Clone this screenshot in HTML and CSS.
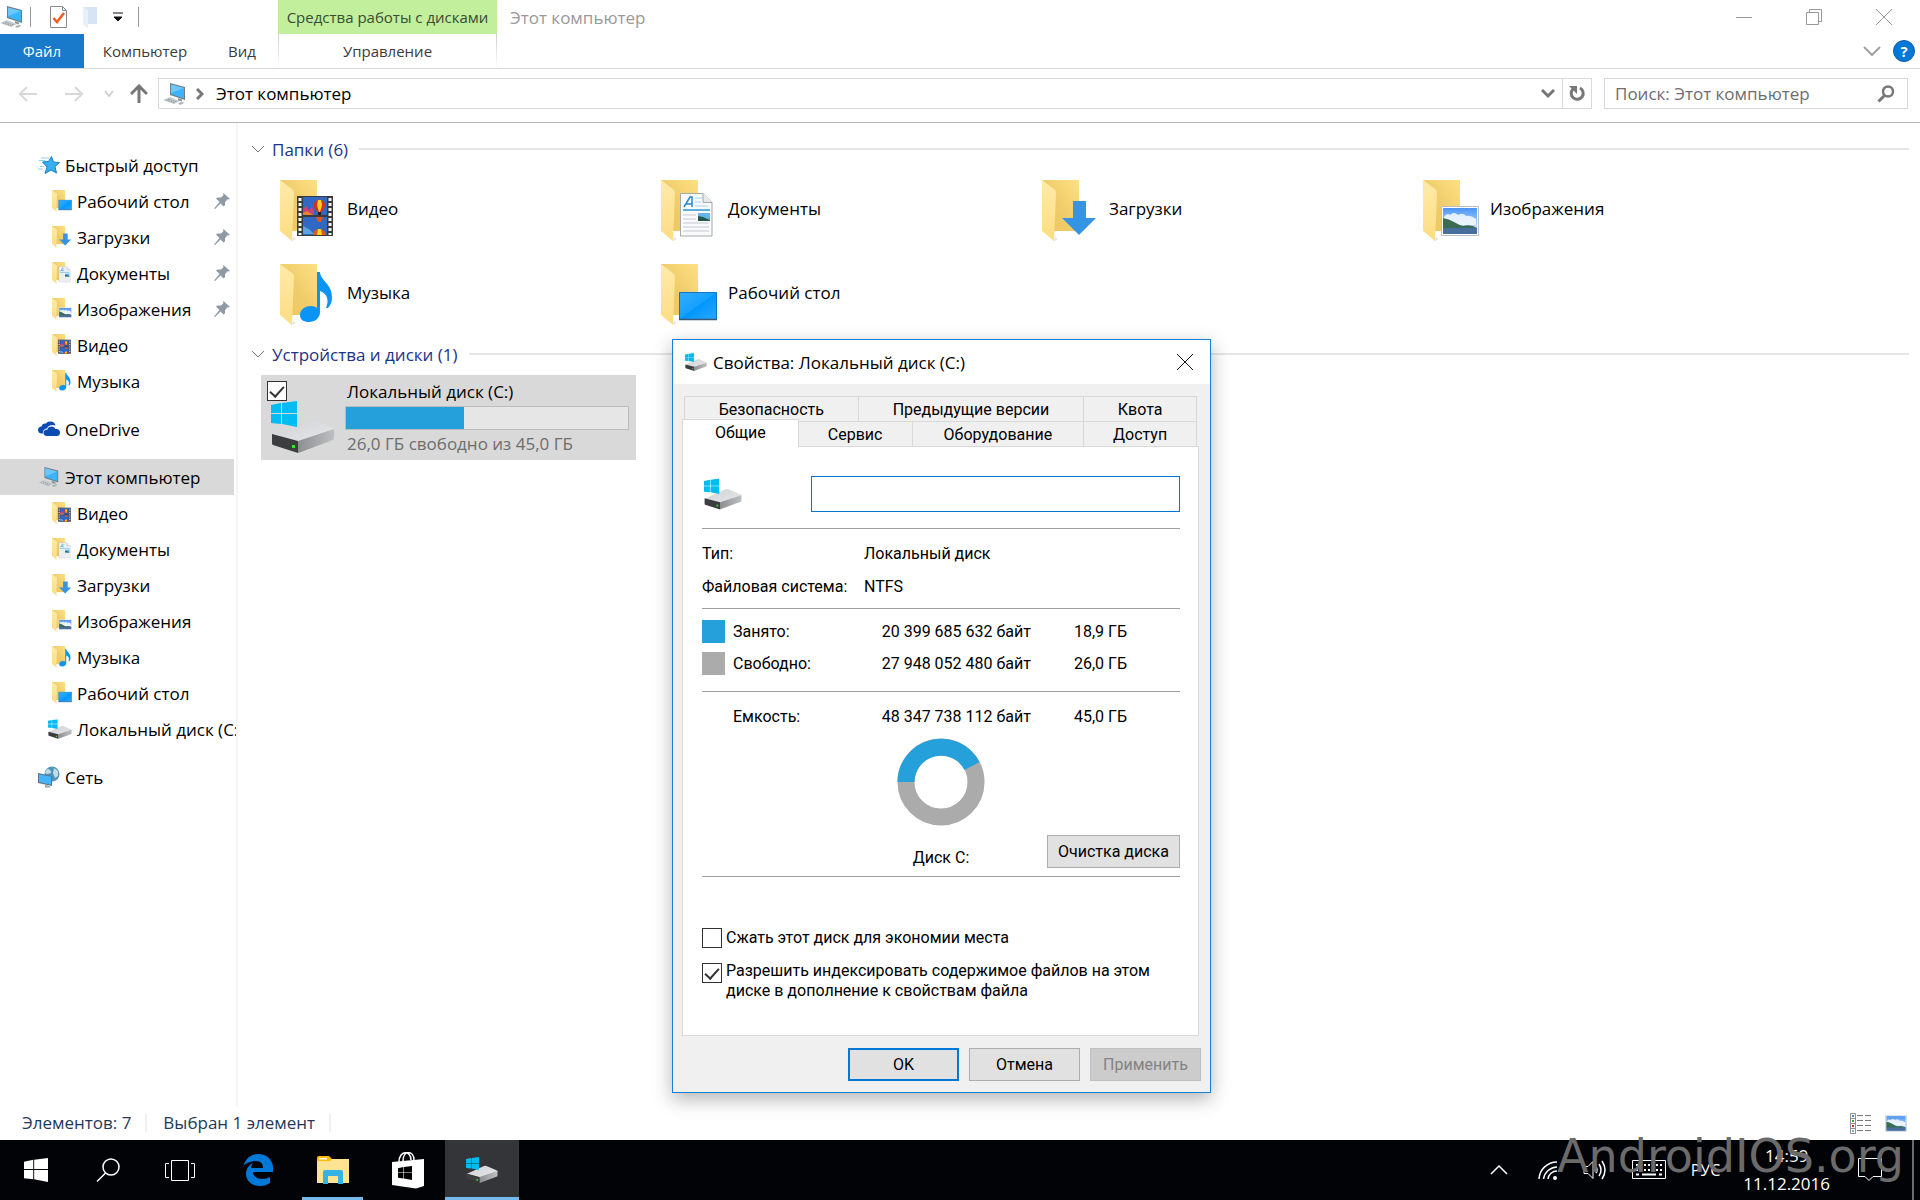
FILE: index.html
```html
<!DOCTYPE html>
<html lang="ru">
<head>
    <meta charset="UTF-8">
    <meta name="viewport" content="width=device-width, initial-scale=1.0">
    <title>Этот компьютер</title>
    <link rel="stylesheet" href="styles.css">
</head>
<body>

    <svg class="sprite" aria-hidden="true">
        <defs>
            <linearGradient id="g-back" x1="0" y1="1" x2="1" y2="0">
                <stop offset="0" stop-color="#ecc65e"/>
                <stop offset="0.5" stop-color="#f0cd6b"/>
                <stop offset="1" stop-color="#fde184"/>
            </linearGradient>
            <linearGradient id="g-flap" x1="0" y1="0" x2="0" y2="1">
                <stop offset="0" stop-color="#ffeaa8"/>
                <stop offset="1" stop-color="#fddd83"/>
            </linearGradient>
            <linearGradient id="g-screen" x1="0" y1="0" x2="1" y2="1">
                <stop offset="0" stop-color="#34adfd"/>
                <stop offset="0.49" stop-color="#16a0ff"/>
                <stop offset="0.5" stop-color="#0097ff"/>
                <stop offset="1" stop-color="#2ba7fb"/>
            </linearGradient>
            <linearGradient id="g-top" x1="0" y1="0" x2="1" y2="1">
                <stop offset="0" stop-color="#cfd1d4"/>
                <stop offset="1" stop-color="#e6e7e9"/>
            </linearGradient>
            <linearGradient id="g-side" x1="0" y1="0" x2="1" y2="0">
                <stop offset="0" stop-color="#8c8e91"/>
                <stop offset="1" stop-color="#bdbfc2"/>
            </linearGradient>
            <linearGradient id="g-sky" x1="0" y1="0" x2="0" y2="1">
                <stop offset="0" stop-color="#4b94f5"/>
                <stop offset="1" stop-color="#e4f3fc"/>
            </linearGradient>
        </defs>

        <symbol id="folder" viewBox="0 0 56 62">
            <path d="M0 0h37v51H0z" fill="url(#g-back)"/>
            <path d="M12 61l4-2-3-2z" fill="#e3e3e3"/>
            <path d="M0 0l12 9q2 1 2 4l-2 48L0 51z" fill="url(#g-flap)"/>
        </symbol>
        <symbol id="f-video" viewBox="0 0 56 62">
            <use href="#folder"/>
            <path d="M17 16h36v40H17z" fill="#3a3a3c"/>
            <path d="M23 17h24v18H23zM23 37h24v18H23z" fill="#3168c4"/>
            <path d="M23 29l3-3 3 4 3-3 2 3v5H23z" fill="#c9407c"/>
            <path d="M23 33l4-2 6 4H23z" fill="#e8842a"/>
            <path d="M23 46l6 3 5 5H23z" fill="#5aa2e2"/>
            <path d="M34 25a5 5 0 0 1 11 0c0 4-3 6-4 7h-3c-1-1-4-3-4-7z" fill="#d8301c"/>
            <path d="M38 20h3l1 5-2 7h-1l-2-7z" fill="#ffd21e"/>
            <path d="M38 32h3v3h-3z" fill="#2a1c12"/>
            <path d="M36 37h7l-2 5h-3zM33 55c0-8 12-8 13 0z" fill="#e0561b"/>
            <path d="M38 49h3l1 6h-5z" fill="#ffd21e"/>
            <path d="M20 18v37M50 18v37" stroke="#f2f2f2" stroke-width="3" stroke-dasharray="3 2"/>
        </symbol>
        <symbol id="f-docs" viewBox="0 0 56 62">
            <use href="#folder"/>
            <path d="M19.500 13.500H42l9 9V56H19.500z" fill="#f9fafb" stroke="#a4a9ae"/>
            <path d="M42 13.500v9h9" fill="#e8e9eb" stroke="#a4a9ae"/>
            <path d="M23 27l6-10h2v10M25 24h6" fill="none" stroke="#2389c9" stroke-width="1.500"/>
            <path d="M34 18h7M34 22h6M34 26h13" stroke="#a5d3ec"/>
            <path d="M22 30h27" stroke="#5fb0dd" stroke-width="2"/>
            <path d="M22 35h13M22 39h13M22 43h26M22 47h26M22 51h26" stroke="#c5c9cd"/>
            <path d="M37 33h12v8H37z" fill="#65b4ea"/>
            <path d="M37 36l5 1 7 3v1H37z" fill="#24584f"/>
        </symbol>
        <symbol id="f-down" viewBox="0 0 56 62">
            <use href="#folder"/>
            <path d="M31 21h13v17h10L37 55 20 38h11z" fill="#3694e5"/>
        </symbol>
        <symbol id="photo" viewBox="0 0 38 30">
            <path d="M.5.500h37v29H.500z" fill="#fff" stroke="#b9bec4"/>
            <path d="M2 2h34v26H2z" fill="url(#g-sky)"/>
            <path d="M3 11q3-5 6-2 4-4 8 0 5-3 8 1 5-1 10 3v6H3z" fill="#fff" opacity=".8"/>
            <path d="M2 12q6 1 11 4t9 4q8-2 14 2v2H2z" fill="#3a6c53"/>
            <path d="M2 22h34v6H2z" fill="#466f9d"/>
        </symbol>
        <symbol id="f-pics" viewBox="0 0 56 62">
            <use href="#folder"/>
            <use href="#photo" x="18" y="26" width="38" height="30"/>
        </symbol>
        <symbol id="f-music" viewBox="0 0 56 62">
            <use href="#folder"/>
            <path d="M37 8h3c0 8 12 12 12 25 0 4-1 8-4 11h-2c3-7 2-14-6-17v21c0 6-5 10-11 10-5 0-9-2-9-7 0-6 6-9 11-9 3 0 5 1 6 2z" fill="#0a94f5"/>
        </symbol>
        <symbol id="f-desk" viewBox="0 0 56 62">
            <use href="#folder"/>
            <path d="M18.500 28.500h37v27h-37z" fill="url(#g-screen)" stroke="#1374c5"/>
            <path d="M18 55.500h38" stroke="#3a5a78" stroke-width="1.500"/>
        </symbol>

        <symbol id="winlogo" viewBox="0 0 26 26">
            <path d="M0 4l10-2v10H0zM11 2l15-2v12H11zM0 13h10v10L0 22zM11 13h15v13l-15-3z"/>
        </symbol>
        <symbol id="drive" viewBox="0 0 64 52">
            <path d="M1 34l35-16q3-1 5 0l21 9q2 1 1 2L28 41z" fill="url(#g-top)"/>
            <path d="M27 40l36-12v9q0 1-1 2L30 51l-3 1z" fill="url(#g-side)"/>
            <path d="M1 33l26 7v12L2 44q-1 0-1-2z" fill="#3c3d3e"/>
            <path d="M21 44h3v3h-3z" fill="#3ae03a"/>
            <use href="#winlogo" width="26" height="26" fill="#00bcf2"/>
        </symbol>

        <symbol id="pc" viewBox="0 0 24 22">
            <path d="M7 0l15 4v13L7 12z" fill="#6f7d88"/>
            <path d="M8 1.500l13 3.500v10.500L8 11z" fill="#3fb3fa"/>
            <path d="M8 1.500l13 3.500L8 10z" fill="#6cc7fd"/>
            <path d="M15 15l4 1.500v2l-4-1z" fill="#8d979e"/>
            <path d="M0 17l7-3 10 4-6 3z" fill="#c9ced2"/>
            <path d="M3 17l9 3M5 16l9 3" stroke="#8b949b" stroke-dasharray="1.500 1"/>
            <path d="M15 20l5-1 1 1-4 2z" fill="#a6adb3"/>
        </symbol>
        <symbol id="star" viewBox="0 0 22 18">
            <path d="M13.500.500l2 5.500 6 .5-4.500 4 1.500 6.500-5.500-3-6 3.500 2-6.500L4.500 6l6-.5z" fill="#35aef2" stroke="#1b7fc9"/>
            <path d="M3 2h8M1 4.500h6M0 13h5M2 10.500h4" stroke="#8fd0f6"/>
        </symbol>
        <symbol id="cloud" viewBox="0 0 22 15">
            <path d="M5 12H3.500C1.500 12 0 10.500 0 8.500 0 6.500 1.500 5 3.500 5 4 2.500 6 1.500 8 2c1-1.500 2.500-2 4.500-2C15 0 17 1.500 17.500 4c-4-1.500-7.500 0-8.500 3-2.500 0-4.500 2.500-4 5z" fill="#0c4bb3"/>
            <path d="M9 14.500c-2 0-3.500-1-3.500-3s1.500-3.500 4-3.500c.5-3 5.500-4.500 8-.5 2.500-.5 4.500 1 4.500 3.500s-1.500 3.500-3 3.500z" fill="#0c4bb3"/>
        </symbol>
        <symbol id="net" viewBox="0 0 22 22">
            <circle cx="14" cy="8" r="7.500" fill="#4f96bd"/>
            <path d="M9 3q4 0 4 4l-4 1-2-1zM16 2l4 3v5l-3 2-2-5z" fill="#c3dde8"/>
            <path d="M0 7l14 3v10L0 17z" fill="#5f7484"/>
            <path d="M1 8.200l12 2.600v8L1 16z" fill="#45b5fa"/>
            <path d="M7 19l4 .8 2 1.700H7z" fill="#9aa4ab"/>
        </symbol>
        <symbol id="pin" viewBox="0 0 16 16">
            <path d="M9.500 0L16 6l-1.500.5-1-.3-2.500 3v3L9.500 13.500 6.500 10.500 1 16l-1-.5L5.500 9 2 5.500 3.500 4.500h3.500l2.500-2.500-.5-1.500z" fill="#8e9ba5"/>
        </symbol>
        <symbol id="lens" viewBox="0 0 18 18">
            <circle cx="11" cy="6.500" r="5" fill="none" stroke="currentColor" stroke-width="2.500"/>
            <path d="M7.500 10.500L1.500 16.500" stroke="currentColor" stroke-width="3"/>
        </symbol>
    </svg>

    <main class="explorer">
        <header class="titlebar">
            <div class="quick">
                <svg class="ico-pc"><use href="#pc"/></svg>
                <span class="bar"></span>
                <button aria-label="Свойства">
                    <svg width="18" height="22" viewBox="0 0 18 22">
                        <path d="M.5.500h12l4 4v17H.500z" fill="#fff" stroke="#8a8a8a"/>
                        <path d="M12.500.500v4h4" fill="none" stroke="#8a8a8a"/>
                        <path d="M3.500 12l3.500 4 7-9" fill="none" stroke="#f05a1c" stroke-width="2.500"/>
                    </svg>
                </button>
                <button aria-label="Новая папка">
                    <svg width="15" height="22" viewBox="0 0 15 22">
                        <path d="M0 1h14v17H2z" fill="#d6e5f6"/>
                        <path d="M0 1l5 3v18l-5-3z" fill="#e8f1fb"/>
                    </svg>
                </button>
                <button aria-label="Настройка панели">
                    <svg width="10" height="10" viewBox="0 0 10 10"><path d="M0 1h10M1 5h8l-4 4z" fill="#111" stroke="#111"/></svg>
                </button>
                <span class="bar"></span>
            </div>
            <div class="context-title">Средства работы с дисками</div>
            <h1>Этот компьютер</h1>
            <div class="win-buttons">
                <button aria-label="Свернуть"><svg width="16" height="16"><path d="M0 8.500h16" stroke="#999"/></svg></button>
                <button aria-label="Развернуть"><svg width="16" height="16"><path d="M.5 3.500h12v12H.500zM3.500 3.500v-3h12v12h-3" fill="none" stroke="#999"/></svg></button>
                <button aria-label="Закрыть"><svg width="16" height="16"><path d="M0 0l16 16M16 0L0 16" stroke="#999"/></svg></button>
            </div>
        </header>

        <nav class="ribbon">
            <button class="file">Файл</button>
            <button class="tab-computer">Компьютер</button>
            <button class="tab-view">Вид</button>
            <button class="tab-manage">Управление</button>
            <div class="ribbon-end">
                <button aria-label="Развернуть ленту"><svg width="18" height="10"><path d="M1 1l8 8 8-8" fill="none" stroke="#a0a0a0" stroke-width="2"/></svg></button>
                <button class="help" aria-label="Справка">?</button>
            </div>
        </nav>

        <div class="address-row">
            <div class="nav-buttons">
                <button aria-label="Назад"><svg width="20" height="16"><path d="M19 8H2M9 1L2 8l7 7" fill="none" stroke="#d8d8d8" stroke-width="2"/></svg></button>
                <button class="forward" aria-label="Вперед"><svg width="20" height="16"><path d="M1 8h17M11 1l7 7-7 7" fill="none" stroke="#d8d8d8" stroke-width="2"/></svg></button>
                <button aria-label="Последние расположения"><svg width="10" height="8"><path d="M1 1l4 5 4-5" fill="none" stroke="#d0d0d0" stroke-width="2"/></svg></button>
                <button aria-label="Вверх"><svg width="18" height="19"><path d="M9 19V2M1 10l8-8 8 8" fill="none" stroke="#777" stroke-width="3"/></svg></button>
            </div>
            <div class="address">
                <svg class="ico-pc"><use href="#pc"/></svg>
                <svg width="8" height="12"><path d="M1 1l5 5-5 5" fill="none" stroke="#777" stroke-width="3"/></svg>
                <a href="#">Этот компьютер</a>
                <button class="drop" aria-label="Предыдущие расположения"><svg width="14" height="10"><path d="M1 1l6 6 6-6" fill="none" stroke="#777" stroke-width="3"/></svg></button>
                <button class="refresh" aria-label="Обновить">
                    <svg width="18" height="18"><path d="M12 3a6 6 0 1 1-7 1" fill="none" stroke="#777" stroke-width="3"/><path d="M1 1h8v8z" fill="#777"/></svg>
                </button>
            </div>
            <div class="search">
                <input type="text" aria-label="Поиск" placeholder="Поиск: Этот компьютер">
                <svg width="18" height="18"><use href="#lens"/></svg>
            </div>
        </div>

        <div class="body">
            <nav class="sidebar">
                <ul>
                    <li><a href="#" class="root"><svg><use href="#star"/></svg>Быстрый доступ</a></li>
                    <li><a href="#"><svg><use href="#f-desk"/></svg>Рабочий стол<svg class="pin"><use href="#pin"/></svg></a></li>
                    <li><a href="#"><svg><use href="#f-down"/></svg>Загрузки<svg class="pin"><use href="#pin"/></svg></a></li>
                    <li><a href="#"><svg><use href="#f-docs"/></svg>Документы<svg class="pin"><use href="#pin"/></svg></a></li>
                    <li><a href="#"><svg><use href="#f-pics"/></svg>Изображения<svg class="pin"><use href="#pin"/></svg></a></li>
                    <li><a href="#"><svg><use href="#f-video"/></svg>Видео</a></li>
                    <li><a href="#"><svg><use href="#f-music"/></svg>Музыка</a></li>
                </ul>
                <ul>
                    <li><a href="#" class="root"><svg><use href="#cloud"/></svg>OneDrive</a></li>
                </ul>
                <ul>
                    <li><a href="#" class="root active"><svg><use href="#pc"/></svg>Этот компьютер</a></li>
                    <li><a href="#"><svg><use href="#f-video"/></svg>Видео</a></li>
                    <li><a href="#"><svg><use href="#f-docs"/></svg>Документы</a></li>
                    <li><a href="#"><svg><use href="#f-down"/></svg>Загрузки</a></li>
                    <li><a href="#"><svg><use href="#f-pics"/></svg>Изображения</a></li>
                    <li><a href="#"><svg><use href="#f-music"/></svg>Музыка</a></li>
                    <li><a href="#"><svg><use href="#f-desk"/></svg>Рабочий стол</a></li>
                    <li><a href="#" class="disk"><svg><use href="#drive"/></svg>Локальный диск (C:)</a></li>
                </ul>
                <ul>
                    <li><a href="#" class="root"><svg><use href="#net"/></svg>Сеть</a></li>
                </ul>
            </nav>

            <section class="content">
                <h2><svg width="14" height="9"><path d="M1 1l6 6 6-6" fill="none" stroke="#777"/></svg>Папки (6)</h2>
                <div class="folders">
                    <a href="#"><svg><use href="#f-video"/></svg>Видео</a>
                    <a href="#"><svg><use href="#f-docs"/></svg>Документы</a>
                    <a href="#"><svg><use href="#f-down"/></svg>Загрузки</a>
                    <a href="#"><svg><use href="#f-pics"/></svg>Изображения</a>
                    <a href="#"><svg><use href="#f-music"/></svg>Музыка</a>
                    <a href="#"><svg><use href="#f-desk"/></svg>Рабочий стол</a>
                </div>
                <h2><svg width="14" height="9"><path d="M1 1l6 6 6-6" fill="none" stroke="#777"/></svg>Устройства и диски (1)</h2>
                <div class="drive-tile">
                    <div class="drive-icon">
                        <input type="checkbox" aria-label="Локальный диск (C:)" checked>
                        <svg><use href="#drive"/></svg>
                    </div>
                    <div class="drive-info">
                        <a href="#">Локальный диск (C:)</a>
                        <div class="meter"><div class="fill" style="width: 42%"></div></div>
                        <p>26,0 ГБ свободно из 45,0 ГБ</p>
                    </div>
                </div>
            </section>
        </div>

        <footer class="status">
            <span>Элементов: 7</span>
            <span>Выбран 1 элемент</span>
            <div class="views">
                <button aria-label="Таблица">
                    <svg width="22" height="21">
                        <path d="M.5.500h5v20h-5zM.5 5.500h5M.5 10.500h5M.5 15.500h5" fill="none" stroke="#8e8e8e"/>
                        <path d="M2 2h2v2H2z" fill="#3b8ad0"/><path d="M2 7h2v2H2z" fill="#4a9e3a"/><path d="M2 12h2v2H2z" fill="#c22a1a"/><path d="M2 17h2v2H2z" fill="#6cb4c8"/>
                        <path d="M7 2.500h6M15 2.500h6M7 7.500h6M15 7.500h6M7 12.500h6M15 12.500h6M7 17.500h6M15 17.500h6" stroke="#777"/>
                    </svg>
                </button>
                <button aria-label="Крупные значки">
                    <svg width="22" height="17"><use href="#photo"/></svg>
                </button>
            </div>
        </footer>
    </main>

    <div class="dialog" role="dialog" aria-labelledby="dlg-title">
        <div class="dialog-head">
            <svg class="ico-drive"><use href="#drive"/></svg>
            <h3 id="dlg-title">Свойства: Локальный диск (C:)</h3>
            <button aria-label="Закрыть окно"><svg width="16" height="16"><path d="M0 0l16 16M16 0L0 16" stroke="#111"/></svg></button>
        </div>

        <div class="tabs tabs-back">
            <button>Безопасность</button>
            <button>Предыдущие версии</button>
            <button>Квота</button>
        </div>
        <div class="tabs tabs-front">
            <button class="selected">Общие</button>
            <button>Сервис</button>
            <button>Оборудование</button>
            <button>Доступ</button>
        </div>

        <div class="panel">
            <div class="name-row">
                <svg><use href="#drive"/></svg>
                <input type="text" aria-label="Метка диска">
            </div>

            <dl>
                <dt>Тип:</dt><dd>Локальный диск</dd>
                <dt>Файловая система:</dt><dd>NTFS</dd>
            </dl>

            <table>
                <tr class="row-used"><td><span class="swatch used"></span></td><th>Занято:</th><td>20 399 685 632 байт</td><td>18,9 ГБ</td></tr>
                <tr class="row-free"><td><span class="swatch free"></span></td><th>Свободно:</th><td>27 948 052 480 байт</td><td>26,0 ГБ</td></tr>
                <tr class="row-total"><td></td><th>Емкость:</th><td>48 347 738 112 байт</td><td>45,0 ГБ</td></tr>
            </table>

            <div class="chart-row">
                <figure>
                    <svg width="88" height="88" viewBox="0 0 88 88">
                        <circle cx="44" cy="44" r="35" fill="none" stroke="#ababab" stroke-width="17"/>
                        <path d="M9 44A35 35 0 0 1 75 28" fill="none" stroke="#26a0da" stroke-width="17"/>
                    </svg>
                    <figcaption>Диск C:</figcaption>
                </figure>
                <button class="btn">Очистка диска</button>
            </div>

            <div class="options">
                <label><input type="checkbox"><span>Сжать этот диск для экономии места</span></label>
                <label><input type="checkbox" checked><span>Разрешить индексировать содержимое файлов на этом диске в дополнение к свойствам файла</span></label>
            </div>
        </div>

        <div class="dialog-buttons">
            <button class="btn default">OK</button>
            <button class="btn">Отмена</button>
            <button class="btn" disabled>Применить</button>
        </div>
    </div>

    <footer class="taskbar">
        <button aria-label="Пуск"><svg width="24" height="24" fill="#fff"><use href="#winlogo"/></svg></button>
        <button aria-label="Поиск"><svg width="24" height="24"><circle cx="15" cy="9" r="8" fill="none" stroke="#fff" stroke-width="1.500"/><path d="M9.500 15L1 23.500" stroke="#fff" stroke-width="1.500"/></svg></button>
        <button aria-label="Представление задач"><svg width="30" height="21"><path d="M6.500.500h17v20h-17zM4 3.500H.500v14H4M26 3.500h3.500v14H26" fill="none" stroke="#fff"/></svg></button>
        <div class="apps">
            <button aria-label="Microsoft Edge">
                <svg width="30" height="32" viewBox="0 0 30 32"><path d="M0 14C1 6 7 0 15 0c9 0 15 6 15 14v4H10c0 4 4 7 9 7 3 0 6-1 8-2v6c-3 2-6 3-10 3-8 0-14-5-14-12 0-5 3-9 7-11-1 1-2 3-2 5h12c0-4-2-7-7-7-7 0-13 4-15 7z" fill="#0078d7"/></svg>
            </button>
            <button class="running" aria-label="Проводник">
                <svg width="32" height="28" viewBox="0 0 32 28"><path d="M0 2q0-2 2-2h10l3 3h17v24H0z" fill="#ffb900"/><path d="M0 5h13l2-2h17v24H0z" fill="#fee391"/><path d="M2 2h8v1.500H2z" fill="#fff"/><path d="M6 28V16q0-2 2-2h16q2 0 2 2v12h-5v-8H11v8z" fill="#35b3e8"/></svg>
            </button>
            <button aria-label="Магазин">
                <svg width="32" height="37" viewBox="0 0 32 37"><path d="M0 10l32-3v27l-8 2.500L0 33z" fill="#fff"/><path d="M7 10c0-12 12-12 12-2M11 9c0-11 11-11 11-1" fill="none" stroke="#fff" stroke-width="1.500"/><use href="#winlogo" x="6" y="14" width="14" height="14" fill="#000"/></svg>
            </button>
            <button class="running current" aria-label="Свойства диска"><svg width="32" height="26"><use href="#drive"/></svg></button>
        </div>

        <div class="tray">
            <button class="more" aria-label="Скрытые значки"><svg width="18" height="10"><path d="M1 9l8-8 8 8" fill="none" stroke="#fff" stroke-width="1.500"/></svg></button>
            <button aria-label="Сеть"><svg width="20" height="20"><path d="M1 19A18 18 0 0 1 19 2M5.500 19A14 14 0 0 1 19 7M10 19a9 9 0 0 1 9-8" fill="none" stroke="#fff" stroke-width="1.500"/><circle cx="17" cy="18" r="2" fill="#fff"/></svg></button>
            <button aria-label="Громкость"><svg width="24" height="20"><path d="M1 6.500h4l5-5v17l-5-5H1z" fill="none" stroke="#fff"/><path d="M13 7q2 3 0 6M16 4q4 6 0 12M19 1q6 9 0 18" fill="none" stroke="#fff" stroke-width="1.500"/></svg></button>
            <button aria-label="Клавиатура"><svg width="34" height="20"><path d="M.5.500h33v18H.500z" fill="none" stroke="#fff"/><path d="M4 5h27M4 10h27" stroke="#fff" stroke-width="2" stroke-dasharray="2 2"/><path d="M4 14.500h3M10 14.500h14M27 14.500h3" stroke="#fff" stroke-width="2"/></svg></button>
            <button class="lang">РУС</button>
            <button class="clock"><time>14:59</time><span>11.12.2016</span></button>
            <button aria-label="Центр уведомлений"><svg width="25" height="24"><path d="M.5.500h23v18H15l-4 4-4-4H.500z" fill="none" stroke="#fff"/></svg></button>
            <span class="peek"></span>
        </div>
    </footer>

    <div class="watermark">AndroidIOS.org</div>

</body>
</html>
```
FILE: styles.css
```css
* {
    box-sizing: border-box;
}
body {
    margin: 0;
    height: 100vh;
    display: flex;
    flex-direction: column;
    overflow: hidden;
    position: relative;
    font-family: "Open Sans", "Noto Sans", sans-serif;
    font-size: 17px;
    color: #000;
    background-color: #fff;
}
button {
    margin: 0;
    padding: 0;
    border: none;
    background: none;
    font: inherit;
    color: inherit;
    display: flex;
    align-items: center;
    justify-content: center;
}
a {
    color: inherit;
    text-decoration: none;
}
h1, h2, h3, p, ul, dl, dd, figure {
    margin: 0;
    padding: 0;
    font-weight: normal;
}
svg {
    flex-shrink: 0;
    display: block;
}
.sprite {
    position: absolute;
    width: 0;
    height: 0;
}
.ico-pc {
    width: 24px;
    height: 22px;
}
.ico-drive {
    width: 22px;
    height: 18px;
}
input[type="checkbox"] {
    appearance: none;
    display: block;
    flex-shrink: 0;
    width: 20px;
    height: 20px;
    margin: 0;
    border: 1px solid #333;
    background-color: #fff;
}
input[type="checkbox"]:checked::after {
    content: "";
    display: block;
    width: 6px;
    height: 12px;
    margin: 1px auto;
    border: solid #333;
    border-width: 0 2px 2px 0;
    transform: rotate(42deg);
}

/* explorer window */
.explorer {
    flex: 1;
    min-height: 0;
    display: flex;
    flex-direction: column;
}
.titlebar {
    height: 34px;
    display: flex;
    align-items: center;
}
.quick {
    width: 278px;
    display: flex;
    align-items: center;
}
.quick .bar {
    width: 1px;
    height: 20px;
    margin: 0 19px 0 6px;
    background-color: #999;
}
.quick button {
    margin-right: 15px;
}
.quick button:nth-last-child(2) {
    margin-right: 9px;
}
.context-title {
    width: 219px;
    height: 34px;
    line-height: 34px;
    text-align: center;
    font-size: 15px;
    color: #3c4a36;
    background-color: #c1ef9b;
}
.titlebar h1 {
    flex: 1;
    padding-left: 13px;
    font-size: 17px;
    color: #999;
}
.win-buttons {
    display: flex;
    gap: 54px;
    padding-right: 28px;
}
.ribbon {
    height: 35px;
    display: flex;
    font-size: 15px;
    color: #3b3b3b;
    border-bottom: 1px solid #dadbdc;
}
.ribbon .file {
    width: 84px;
    color: #fff;
    background-color: #1979ca;
}
.tab-computer {
    width: 122px;
}
.tab-view {
    width: 72px;
}
.tab-manage {
    width: 219px;
    border: solid #d5d5d5;
    border-width: 0 1px;
    border-image: linear-gradient(#ccc, #fff) 1;
}
.ribbon-end {
    margin-left: auto;
    padding-right: 5px;
    display: flex;
    align-items: center;
    gap: 12px;
}
.help {
    width: 22px;
    height: 22px;
    border: 1px solid #0a5ca8;
    border-radius: 50%;
    color: #fff;
    font-weight: bold;
    background-color: #0078d7;
}
.address-row {
    display: flex;
    align-items: center;
    padding: 9px 12px 13px 18px;
    border-bottom: 1px solid #b5b5b5;
}
.nav-buttons {
    width: 140px;
    display: flex;
    align-items: center;
    gap: 20px;
}
.nav-buttons .forward {
    margin-left: 6px;
}
.nav-buttons button:last-child {
    margin-left: -4px;
}
.address {
    flex: 1;
    height: 31px;
    display: flex;
    align-items: center;
    padding-left: 4px;
    border: 1px solid #d9d9d9;
}
.address .ico-pc {
    margin-right: 9px;
}
.address a {
    flex: 1;
    padding-left: 12px;
}
.drop {
    width: 28px;
}
.refresh {
    width: 29px;
    height: 29px;
    border-left: 1px solid #d9d9d9;
}
.search {
    width: 304px;
    height: 31px;
    margin-left: 12px;
    padding: 0 12px 0 10px;
    display: flex;
    align-items: center;
    border: 1px solid #d9d9d9;
    color: #777;
}
.search input {
    flex: 1;
    min-width: 0;
    padding: 0;
    border: none;
    outline: none;
    font: inherit;
}
.search input::placeholder {
    color: #6d6d6d;
    opacity: 1;
}

.body {
    flex: 1;
    min-height: 0;
    display: flex;
}
.sidebar {
    width: 238px;
    padding-top: 24px;
    border-right: 2px solid #f5f5f5;
}
.sidebar ul {
    list-style: none;
    margin-bottom: 12px;
}
.sidebar a {
    height: 36px;
    display: flex;
    align-items: center;
    padding-left: 52px;
    white-space: nowrap;
    overflow: hidden;
}
.sidebar a svg {
    width: 20px;
    height: 22px;
    margin-right: 5px;
}
.sidebar a.root {
    padding-left: 38px;
}
.sidebar a.root svg {
    width: 22px;
}
.sidebar a.disk {
    padding-left: 48px;
}
.sidebar a.disk svg {
    width: 24px;
}
.sidebar a.active {
    margin-right: 2px;
    background-color: #d9d9d9;
}
.sidebar a .pin {
    width: 16px;
    height: 16px;
    margin: 0 6px 0 auto;
}

.content {
    flex: 1;
    padding: 9px 11px 0 13px;
}
.content h2 {
    height: 34px;
    display: flex;
    align-items: center;
    gap: 7px;
    font-size: 17px;
    color: #1e3287;
}
.content h2::after {
    content: "";
    flex: 1;
    height: 2px;
    margin-left: 4px;
    background-color: #e5e5e5;
}
.folders {
    display: grid;
    grid-template-columns: repeat(4, 381px);
    padding: 0 0 3px 29px;
}
.folders a {
    height: 84px;
    display: flex;
    align-items: center;
    gap: 11px;
}
.folders svg {
    width: 56px;
    height: 62px;
    margin-top: 6px;
}
.drive-tile {
    width: 375px;
    margin: 4px 0 0 10px;
    padding: 5px 7px 4px 6px;
    display: flex;
    background-color: #d9d9d9;
}
.drive-icon {
    width: 78px;
    padding-top: 1px;
}
.drive-icon svg {
    width: 64px;
    height: 52px;
    margin-left: 4px;
}
.drive-info {
    flex: 1;
}
.drive-info a, .drive-info p {
    display: block;
    padding-left: 2px;
    line-height: 24px;
}
.meter {
    height: 24px;
    margin: 2px 0;
    border: 1px solid #bcbcbc;
    background-color: #e6e6e6;
}
.meter .fill {
    height: 100%;
    background-color: #26a0da;
}
.drive-info p {
    color: #6d6d6d;
}
.status {
    height: 34px;
    display: flex;
    align-items: center;
    padding: 0 13px 0 22px;
    color: #1e395b;
}
.status span {
    height: 18px;
    line-height: 18px;
    padding-right: 14px;
    margin-right: 16px;
    border-right: 2px solid #f0f0f0;
}
.views {
    margin-left: auto;
    display: flex;
    align-items: center;
    gap: 13px;
}

/* disk properties */
.dialog {
    position: absolute;
    left: 672px;
    top: 339px;
    width: 539px;
    border: 1px solid #1a7fd0;
    background-color: #f0f0f0;
    box-shadow: 0 6px 18px rgba(0,0,0,0.3);
    font-family: Roboto, Arial, sans-serif;
    font-size: 16px;
}
.dialog-head {
    height: 44px;
    display: flex;
    align-items: center;
    gap: 6px;
    padding: 0 17px 0 12px;
    font-family: "Open Sans", "Noto Sans", sans-serif;
    background-color: #fff;
}
.dialog-head h3 {
    flex: 1;
    font-size: 17px;
}
.tabs {
    display: grid;
}
.tabs button {
    height: 25px;
    border: 1px solid #d9d9d9;
    border-bottom: none;
    border-left: none;
}
.tabs-back {
    grid-template-columns: 175fr 226fr 113fr;
    margin: 12px 13px 0 11px;
}
.tabs-back button:first-child {
    border-left: 1px solid #d9d9d9;
}
.tabs-front {
    grid-template-columns: 117fr 114fr 172fr 113fr;
    align-items: end;
    margin: 0 13px 0 9px;
}
.tabs .selected {
    position: relative;
    z-index: 1;
    height: 28px;
    margin: -2px 0 -1px;
    padding-bottom: 2px;
    border-left: 1px solid #d9d9d9;
    background-color: #fff;
}
.panel {
    height: 590px;
    margin: 0 11px 0 9px;
    padding: 29px 18px 0 19px;
    border: 1px solid #d9d9d9;
    background-color: #fff;
}
.name-row {
    display: flex;
    align-items: center;
    justify-content: space-between;
    padding-bottom: 16px;
    border-bottom: 1px solid #a0a0a0;
}
.name-row svg {
    width: 38px;
    height: 36px;
    margin-left: 2px;
}
.name-row input {
    width: 369px;
    height: 36px;
    padding: 0 8px;
    border: 1px solid #0078d7;
    outline: none;
    font: inherit;
}
dl {
    display: grid;
    grid-template-columns: 162px 1fr;
    padding: 8px 0 5px;
    line-height: 33px;
    white-space: nowrap;
    border-bottom: 1px solid #a0a0a0;
}
table {
    width: 100%;
    border-collapse: collapse;
}
td, th {
    padding: 0;
    text-align: right;
    font-weight: normal;
}
th {
    width: 110px;
    text-align: left;
}
td:first-child {
    width: 31px;
}
td:nth-child(3) {
    width: 188px;
}
td:last-child {
    padding-right: 53px;
}
.row-used td, .row-used th {
    height: 38px;
    padding-top: 6px;
}
.row-free td, .row-free th {
    height: 44px;
    padding-bottom: 10px;
}
.row-total td, .row-total th {
    height: 47px;
    padding-top: 3px;
    border-top: 1px solid #a0a0a0;
}
.swatch {
    display: block;
    width: 23px;
    height: 23px;
}
.used {
    background-color: #26a0da;
}
.free {
    background-color: #ababab;
}
.chart-row {
    display: grid;
    grid-template-columns: 1fr auto 1fr;
    padding-bottom: 8px;
    border-bottom: 1px solid #a0a0a0;
}
figure {
    grid-column: 2;
    display: flex;
    flex-direction: column;
    align-items: center;
    gap: 22px;
}
figcaption {
    line-height: 20px;
}
.btn {
    width: 111px;
    height: 33px;
    border: 1px solid #adadad;
    background-color: #e1e1e1;
}
.chart-row .btn {
    width: 133px;
    align-self: end;
    justify-self: end;
}
.btn.default {
    border: 2px solid #0078d7;
}
.btn:disabled {
    color: #838383;
    border-color: #bfbfbf;
    background-color: #ccc;
}
.options {
    display: flex;
    flex-direction: column;
    gap: 13px;
    padding-top: 51px;
}
.options label {
    display: flex;
    gap: 4px;
    line-height: 20px;
}
.options label + label input {
    margin-top: 2px;
}
.dialog-buttons {
    display: flex;
    justify-content: flex-end;
    gap: 10px;
    padding: 12px 9px 11px;
}

/* taskbar */
.taskbar {
    height: 60px;
    display: flex;
    color: #fff;
    background-color: #010307;
}
.taskbar button {
    width: 72px;
}
.apps {
    display: flex;
    padding-left: 4px;
}
.apps button {
    width: 75px;
}
.apps .running {
    width: 61px;
    margin: 0 7px;
    padding-top: 3px;
    border-bottom: 3px solid #76b9ed;
}
.apps .current {
    width: 74px;
    margin: 0;
    background-color: #343539;
}
.tray {
    margin-left: auto;
    display: flex;
    align-items: center;
}
.tray button {
    width: auto;
    margin-right: 25px;
}
.tray .more {
    margin-right: 30px;
}
.tray .lang {
    margin-right: 23px;
    font-size: 16px;
}
.tray .clock {
    margin-right: 28px;
    flex-direction: column;
    line-height: 28px;
}
.peek {
    width: 2px;
    height: 60px;
    margin: 0 6px 0 4px;
    background-color: #6b6b6b;
}
.watermark {
    position: absolute;
    right: 16px;
    bottom: 14px;
    font-family: "Comic Sans MS", "DejaVu Sans", sans-serif;
    font-size: 46px;
    line-height: 60px;
    color: #6b6b6b;
    pointer-events: none;
}
```
